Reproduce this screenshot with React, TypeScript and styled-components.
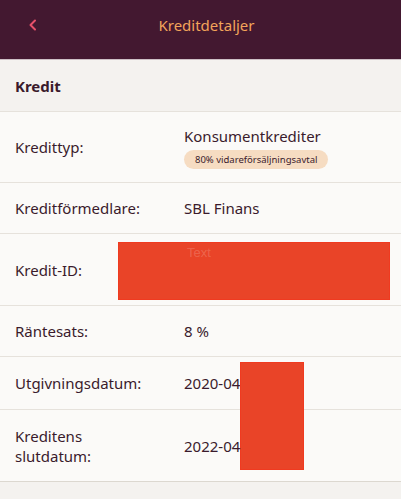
import React from "react";
import styled, { createGlobalStyle } from "styled-components";

const GlobalStyle = createGlobalStyle`
  html, body {
    margin: 0;
    padding: 0;
    background: #f4f2ef;
  }
  * {
    box-sizing: border-box;
  }
`;

const Page = styled.div`
  width: 401px;
  height: 499px;
  overflow: hidden;
  background: #f4f2ef;
  font-family: "Noto Sans", sans-serif;
  color: #3a1a2c;
`;

const Header = styled.header`
  height: 60px;
  background: #431830;
  border-bottom: 1px solid #cdbfc5;
  display: grid;
  grid-template-columns: 60px 1fr 48px;
  align-items: center;
  padding-bottom: 10px;
`;

const BackButton = styled.button`
  background: none;
  border: none;
  padding: 0 0 0 28px;
  display: flex;
  align-items: center;
  cursor: pointer;
`;

const Title = styled.h1`
  margin: 0;
  text-align: center;
  font-size: 15px;
  font-weight: 400;
  color: #f2a45a;
`;

const SectionHeader = styled.div`
  height: 52px;
  padding: 0 15px;
  display: flex;
  align-items: center;
  font-size: 15px;
  font-weight: 700;
  color: #3a1a2c;
  background: #f4f2ef;
  border-bottom: 1px solid #e6e2dc;
`;

const List = styled.div`
  background: #fbfaf8;
  border-bottom: 1px solid #dcd8d0;
`;

const Row = styled.div<{ $height: number }>`
  height: ${(p) => p.$height}px;
  display: grid;
  grid-template-columns: 169px 1fr;
  align-items: center;
  padding-left: 15px;
  border-bottom: 1px solid #e6e2dc;
  &:last-child {
    border-bottom: none;
  }
`;

const Label = styled.div`
  font-size: 15px;
  line-height: 20px;
`;

const Value = styled.div`
  font-size: 15px;
  line-height: 20px;
  position: relative;
`;

const Badge = styled.span`
  display: inline-block;
  margin-top: 4px;
  padding: 0 11px;
  height: 19px;
  line-height: 19px;
  border-radius: 10px;
  background: #f6dcc2;
  font-size: 9.5px;
  color: #3a1a2c;
`;

const Redaction = styled.div<{ $w: number; $h: number; $top: number; $left: number }>`
  position: absolute;
  left: ${(p) => p.$left}px;
  top: ${(p) => p.$top}px;
  width: ${(p) => p.$w}px;
  height: ${(p) => p.$h}px;
  background: #e94428;
  border: 1px solid #f03a20;
`;

const GhostText = styled.span`
  position: absolute;
  left: 68px;
  top: 0;
  font-family: "Liberation Sans", Arial, sans-serif;
  font-size: 13px;
  color: rgba(255, 255, 255, 0.18);
`;

const Chevron = () => (
  <svg width="10" height="12" viewBox="0 0 10 12">
    <path
      d="M7 1.5 L2.5 6 L7 10.5"
      fill="none"
      stroke="#e8506a"
      strokeWidth="2"
      strokeLinecap="round"
      strokeLinejoin="round"
    />
  </svg>
);

export default function App() {
  return (
    <Page>
      <GlobalStyle />
      <Header>
        <BackButton aria-label="Tillbaka">
          <Chevron />
        </BackButton>
        <Title>Kreditdetaljer</Title>
        <div />
      </Header>
      <SectionHeader>Kredit</SectionHeader>
      <List>
        <Row $height={71}>
          <Label>Kredittyp:</Label>
          <Value>
            <div>Konsumentkrediter</div>
            <Badge>80% vidareförsäljningsavtal</Badge>
          </Value>
        </Row>
        <Row $height={51}>
          <Label>Kreditförmedlare:</Label>
          <Value>SBL Finans</Value>
        </Row>
        <Row $height={72}>
          <Label>Kredit-ID:</Label>
          <Value>
            <Redaction $left={-66} $top={-28} $w={272} $h={58}>
              <GhostText>Text</GhostText>
            </Redaction>
          </Value>
        </Row>
        <Row $height={51}>
          <Label>Räntesats:</Label>
          <Value>8 %</Value>
        </Row>
        <Row $height={53}>
          <Label>Utgivningsdatum:</Label>
          <Value>
            2020-04
            <Redaction $left={56} $top={-11} $w={64} $h={108} />
          </Value>
        </Row>
        <Row $height={71}>
          <Label>
            Kreditens
            <br />
            slutdatum:
          </Label>
          <Value>2022-04</Value>
        </Row>
      </List>
    </Page>
  );
}
